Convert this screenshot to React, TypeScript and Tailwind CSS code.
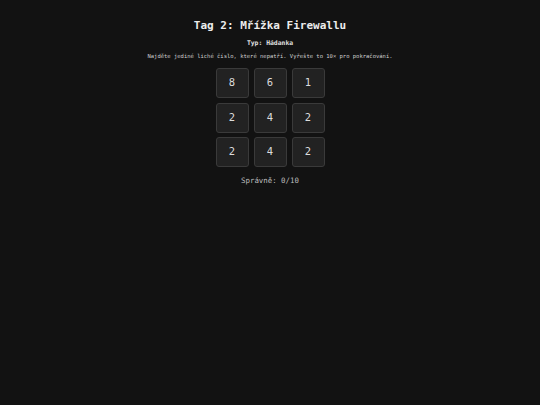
const cells = [8, 6, 1, 2, 4, 2, 2, 4, 2];

export default function App() {
  return (
    <div
      className="min-h-[405px] w-full bg-[#121212] text-[#e6e6e6] flex flex-col items-center pt-[19px]"
      style={{ fontFamily: '"DejaVu Sans Mono", "Liberation Mono", monospace' }}
    >
      <h1 className="text-[11px] leading-[14px] font-bold text-[#ececec]">Tag 2: Mřížka Firewallu</h1>
      <p className="mt-[6px] text-[6.4px] leading-[8px] font-bold text-[#e0e0e0]">Typ: Hádanka</p>
      <p className="mt-[5.5px] text-[5.5px] leading-[7px] text-[#cfcfcf]">
        Najděte jediné liché číslo, které nepatří. Vyřešte to 10× pro pokračování.
      </p>

      <div className="mt-[8.5px] grid grid-cols-[33px_33px_33px] auto-rows-[30px] gap-x-[5px] gap-y-[4.5px]">
        {cells.map((n, i) => (
          <button
            key={i}
            type="button"
            className="flex items-center justify-center rounded-[3px] border border-[#3a3a3a] bg-[#222222] text-[10.5px] text-[#dcdcdc]"
          >
            {n}
          </button>
        ))}
      </div>

      <p className="mt-[8.5px] text-[7.4px] leading-[9px] text-[#bdbdbd]">Správně: 0/10</p>
    </div>
  );
}
